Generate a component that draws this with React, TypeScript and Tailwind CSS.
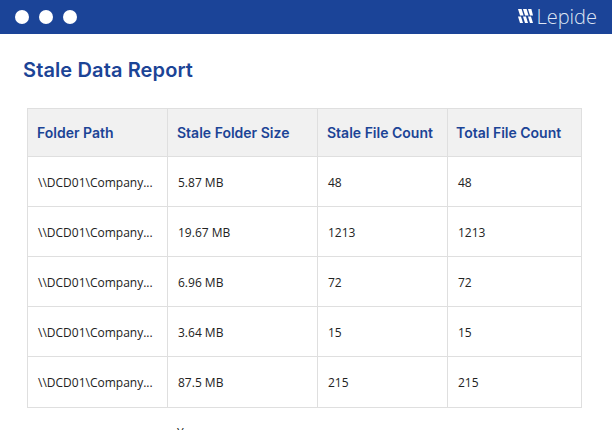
const ROWS = [
  { size: "5.87 MB", stale: "48", total: "48" },
  { size: "19.67 MB", stale: "1213", total: "1213" },
  { size: "6.96 MB", stale: "72", total: "72" },
  { size: "3.64 MB", stale: "15", total: "15" },
  { size: "87.5 MB", stale: "215", total: "215" },
];

const HEADERS = ["Folder Path", "Stale Folder Size", "Stale File Count", "Total File Count"];

function Logo() {
  return (
    <svg width="15" height="14" viewBox="0 0 15 14" fill="#fff" className="-mt-[3px]">
      <path d="M0 0h3.6l2 6.4H2z" />
      <path d="M5 0h3.6l2 6.4H7z" />
      <path d="M10 0h3.4L15 6.4h-3z" />
      <path d="M0 7.4h3l2 6.6H2z" />
      <path d="M5 7.4h3l2 6.6H7z" />
      <path d="M10 7.4h3l2 6.6h-3z" />
    </svg>
  );
}

export default function App() {
  return (
    <div className="h-[430px] w-[612px] overflow-hidden bg-white font-['Open_Sans',sans-serif]">
      {/* Title bar */}
      <div className="flex h-[34px] items-center justify-between bg-[#1b4498] px-[15px]">
        <div className="flex gap-[10px]">
          <span className="h-[14px] w-[14px] rounded-full bg-white" />
          <span className="h-[14px] w-[14px] rounded-full bg-white" />
          <span className="h-[14px] w-[14px] rounded-full bg-white" />
        </div>
        <div className="flex items-center gap-[3px]">
          <Logo />
          <span className="text-[20px] font-light leading-none text-[#dfe6f3]">Lepide</span>
        </div>
      </div>

      <h1 className="ml-[23px] mt-[22px] font-['Inter',sans-serif] text-[20px] font-semibold leading-[28px] tracking-[0.12px] text-[#1c4496]">
        Stale Data Report
      </h1>

      {/* Table */}
      <table className="ml-[27px] mt-[24px] w-[554px] table-fixed border-collapse">
        <colgroup>
          <col className="w-[140px]" />
          <col className="w-[150px]" />
          <col className="w-[130px]" />
          <col className="w-[134px]" />
        </colgroup>
        <thead>
          <tr className="h-[48px] bg-[#f1f1f1]">
            {HEADERS.map((h) => (
              <th
                key={h}
                className="border border-[#dfdfdf] pl-[9px] text-left font-['Inter',sans-serif] text-[14px] font-semibold text-[#1c4496] last:pl-[8px]"
              >
                {h}
              </th>
            ))}
          </tr>
        </thead>
        <tbody className="text-[12px] text-[#222]">
          {ROWS.map((r, i) => (
            <tr key={i} className="h-[50px] last:h-[51px] [&>td]:border [&>td]:border-[#dfdfdf] [&>td]:pl-[10px] [&>td]:pt-[3px] last:[&>td]:pb-[1px]">
              <td>\\DCD01\Company...</td>
              <td>{r.size}</td>
              <td>{r.stale}</td>
              <td>{r.total}</td>
            </tr>
          ))}
        </tbody>
      </table>

      <p className="ml-[177px] mt-[17px] text-[12px] leading-[16px] text-[#222]">Yes</p>
    </div>
  );
}
